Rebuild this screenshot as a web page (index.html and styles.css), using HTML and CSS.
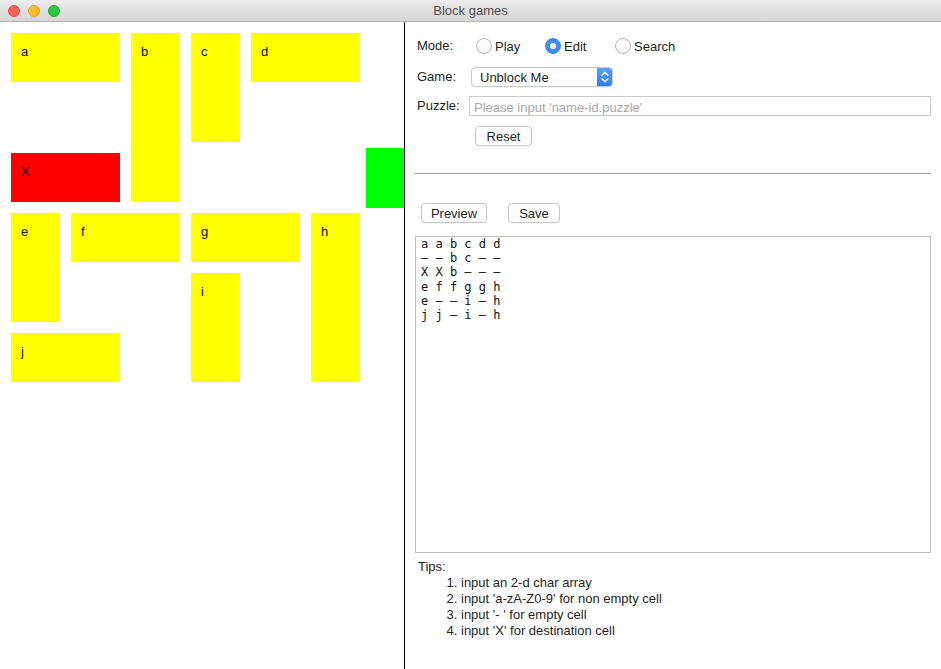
FILE: index.html
```html
<!DOCTYPE html>
<html>
<head>
<meta charset="utf-8">
<title>Block games</title>
<link rel="stylesheet" href="styles.css">
</head>
<body>
<div class="window">
  <div class="titlebar">
    <div class="lights">
      <span class="light red"></span>
      <span class="light yellow"></span>
      <span class="light green"></span>
    </div>
    <div class="title">Block games</div>
  </div>
  <div class="main">
    <div class="board-panel">
      <div class="board">
        <div class="block b-a">a</div>
        <div class="block b-b">b</div>
        <div class="block b-c">c</div>
        <div class="block b-d">d</div>
        <div class="block b-x">X</div>
        <div class="exit"></div>
        <div class="block b-e">e</div>
        <div class="block b-f">f</div>
        <div class="block b-g">g</div>
        <div class="block b-h">h</div>
        <div class="block b-i">i</div>
        <div class="block b-j">j</div>
      </div>
    </div>
    <div class="side">
      <div class="form">
        <div class="label">Mode:</div>
        <div class="radios">
          <label class="radio"><span class="circle"></span><span>Play</span></label>
          <label class="radio"><span class="circle checked"></span><span>Edit</span></label>
          <label class="radio"><span class="circle"></span><span>Search</span></label>
        </div>
        <div class="label">Game:</div>
        <div class="select">
          <span class="select-text">Unblock Me</span>
          <span class="stepper">
            <svg width="16" height="20" viewBox="0 0 16 20"><path d="M5 8.2 L8 5.2 L11 8.2" fill="none" stroke="#fff" stroke-width="1.4" stroke-linecap="round" stroke-linejoin="round"/><path d="M5 11.8 L8 14.8 L11 11.8" fill="none" stroke="#fff" stroke-width="1.4" stroke-linecap="round" stroke-linejoin="round"/></svg>
          </span>
        </div>
        <div class="label">Puzzle:</div>
        <div class="input">Please input 'name-id.puzzle'</div>
        <div></div>
        <div class="reset-wrap"><span class="btn reset">Reset</span></div>
      </div>
      <div class="sep"></div>
      <div class="actions">
        <span class="btn preview">Preview</span>
        <span class="btn save">Save</span>
      </div>
      <div class="textarea">a a b c d d
– – b c – –
X X b – – –
e f f g g h
e – – i – h
j j – i – h</div>
      <div class="tips">
        <div class="tips-title">Tips:</div>
        <ol class="tips-list">
          <li>input an 2-d char array</li>
          <li>input 'a-zA-Z0-9' for non empty cell</li>
          <li>input '- ' for empty cell</li>
          <li>input 'X' for destination cell</li>
        </ol>
      </div>
    </div>
  </div>
</div>
</body>
</html>
```
FILE: styles.css
```css
* { box-sizing: border-box; }
html, body {
  margin: 0;
  padding: 0;
  background: #fff;
}
body {
  font-family: "Liberation Sans", Arial, sans-serif;
  font-size: 13px;
  color: #1e1e1e;
}
.window {
  width: 941px;
  height: 669px;
  display: flex;
  flex-direction: column;
  overflow: hidden;
}
.titlebar {
  height: 22px;
  flex: none;
  background: linear-gradient(#ececec, #d6d6d6);
  border-bottom: 1px solid #b3b3b3;
  display: grid;
  grid-template-columns: 1fr;
  align-items: center;
}
.lights {
  grid-row: 1;
  grid-column: 1;
  display: flex;
  gap: 8px;
  padding-left: 8px;
  align-self: center;
}
.light {
  width: 12px;
  height: 12px;
  border-radius: 50%;
}
.light.red { background: #fc5f57; border: 1px solid #de4a42; }
.light.yellow { background: #fdbc2e; border: 1px solid #de9f25; }
.light.green { background: #28c840; border: 1px solid #1fa830; }
.title {
  grid-row: 1;
  grid-column: 1;
  text-align: center;
  color: #4d4d4d;
  font-size: 13px;
  line-height: 21px;
}
.main {
  flex: 1;
  display: flex;
  min-height: 0;
}
.board-panel {
  width: 405px;
  flex: none;
  border-right: 1px solid #000;
  padding: 6px 0 0 6px;
  overflow: hidden;
}
.board {
  display: grid;
  grid-template-columns: repeat(7, 60px);
  grid-template-rows: repeat(6, 60px);
  width: 420px;
}
.block {
  margin: 5px 6px 6px 5px;
  background: #ffff00;
  padding: 11px 0 0 10px;
  line-height: 16px;
  font-size: 13px;
  color: #111;
}
.b-x { background: #ff0000; }
.exit { background: #00ff00; grid-column: 7; grid-row: 3; }
.b-a { grid-column: 1 / span 2; grid-row: 1; }
.b-b { grid-column: 3; grid-row: 1 / span 3; }
.b-c { grid-column: 4; grid-row: 1 / span 2; }
.b-d { grid-column: 5 / span 2; grid-row: 1; }
.b-x { grid-column: 1 / span 2; grid-row: 3; }
.b-e { grid-column: 1; grid-row: 4 / span 2; }
.b-f { grid-column: 2 / span 2; grid-row: 4; }
.b-g { grid-column: 4 / span 2; grid-row: 4; }
.b-h { grid-column: 6; grid-row: 4 / span 3; }
.b-i { grid-column: 4; grid-row: 5 / span 2; }
.b-j { grid-column: 1 / span 2; grid-row: 6; }

.side {
  flex: 1;
  padding: 14px 10px 0 10px;
  display: flex;
  flex-direction: column;
}
.form {
  display: grid;
  grid-template-columns: 54px 1fr;
  grid-template-rows: 20px 31px 29px 30px;
  align-items: end;
}
.label {
  padding-left: 2px;
  line-height: 20px;
  height: 20px;
  color: #1e1e1e;
}
.radios {
  display: grid;
  grid-template-columns: 69px 70px auto;
  margin-left: 7px;
  height: 20px;
  align-items: center;
}
.radio {
  display: flex;
  align-items: center;
  gap: 3px;
}
.circle {
  width: 16px;
  height: 16px;
  border-radius: 50%;
  border: 1px solid #b4b4b4;
  background: linear-gradient(#fff, #f6f6f6);
  display: inline-block;
}
.circle.checked {
  border: 1px solid #3a86ef;
  background: radial-gradient(circle, #fff 0, #fff 2.8px, #3b8ff6 3.4px);
}
.select {
  width: 142px;
  height: 20px;
  margin-left: 2px;
  border: 1px solid #c9c9c9;
  border-radius: 4px;
  background: #fff;
  display: flex;
  align-items: center;
  justify-content: space-between;
  overflow: hidden;
  box-shadow: 0 0.5px 0.5px rgba(0,0,0,0.08);
}
.select-text {
  padding-left: 8px;
  padding-top: 1px;
  color: #1e1e1e;
}
.stepper {
  width: 16px;
  height: 20px;
  margin-right: -1px;
  margin-top: -2px;
  margin-bottom: -2px;
  background: linear-gradient(#5aa1f8, #2c7cf0);
  border-radius: 0 4px 4px 0;
  display: flex;
  align-items: center;
  justify-content: center;
}
.stepper svg { display: block; }
.input {
  height: 20px;
  border: 1px solid #cacaca;
  color: #a8a8a8;
  padding-left: 4px;
  line-height: 19px;
  padding-top: 1px;
  background: #fff;
}
.reset-wrap { padding-left: 6px; height: 20px; }
.btn {
  display: inline-block;
  height: 20px;
  line-height: 18px;
  padding-top: 1px;
  border: 1px solid #c6c6c6;
  border-radius: 4px;
  background: #fff;
  text-align: center;
  color: #1e1e1e;
  box-shadow: 0 0.5px 0.5px rgba(0,0,0,0.06);
}
.reset { width: 57px; }
.sep {
  height: 1px;
  background: #9c9c9c;
  margin-top: 27px;
}
.actions {
  display: flex;
  gap: 21px;
  padding-left: 6px;
  margin-top: 29px;
}
.preview { width: 66px; }
.save { width: 52px; }
.textarea {
  margin-top: 13px;
  height: 317px;
  border: 1px solid #bdbdbd;
  padding: 0 5px;
  font-family: "DejaVu Sans Mono", "Liberation Mono", monospace;
  font-size: 12px;
  line-height: 14.2px;
  white-space: pre;
  color: #111;
}
.tips {
  margin-top: 6px;
  line-height: 16px;
}
.tips-title { padding-left: 3px; }
.tips-list {
  margin: 0;
  padding-left: 46px;
}
.tips-list li { padding-left: 0; }
```
